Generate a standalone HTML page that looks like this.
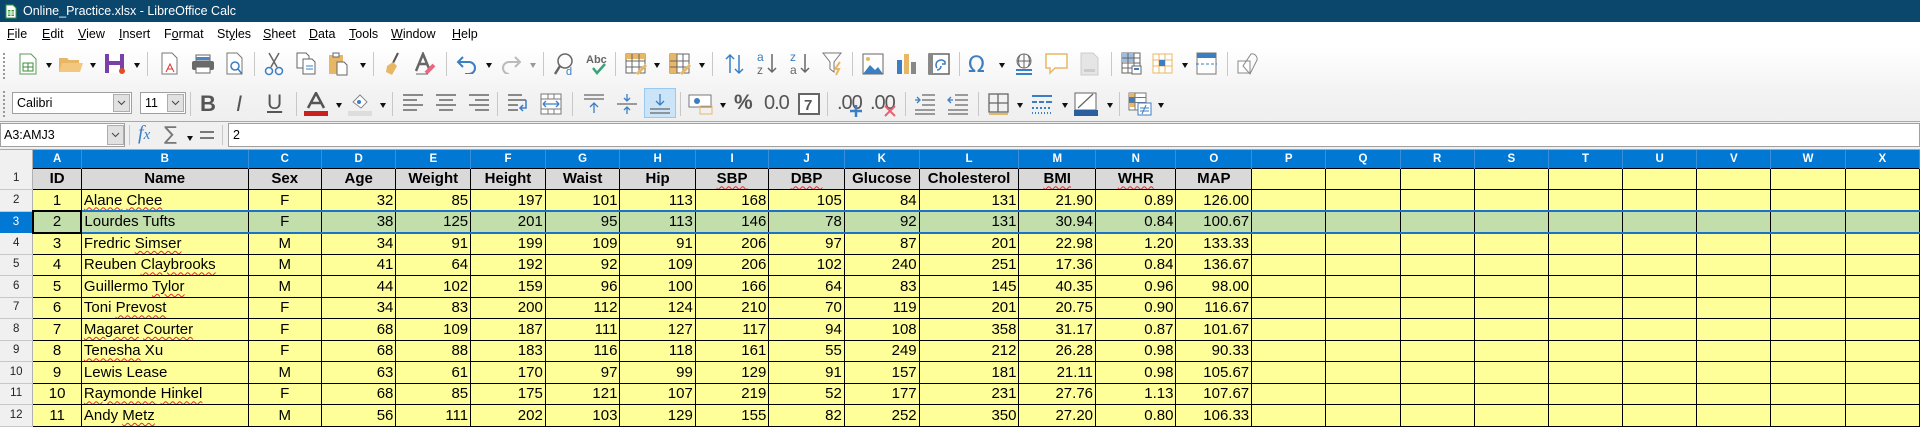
<!DOCTYPE html>
<html><head><meta charset="utf-8">
<style>
*{margin:0;padding:0;box-sizing:border-box}
body{width:1920px;height:428px;overflow:hidden;background:#fff;font-family:"Liberation Sans",sans-serif;position:relative}
.abs{position:absolute}
#title{left:0;top:0;width:1920px;height:22px;background:#0b466d;color:#fff;font-size:12.5px;line-height:22px;padding-left:23px}
#menu{left:0;top:22px;width:1920px;height:25px;background:#fff;font-size:12.5px}
#menu span{position:absolute;top:5px;color:#000}
#tb{left:0;top:47px;width:1920px;height:74px;background:linear-gradient(#fff,#f3f3f3 60%,#efefef)}
.ic{position:absolute}
.dd{position:absolute;width:0;height:0;border-left:3.5px solid transparent;border-right:3.5px solid transparent;border-top:5px solid #111}
.sep{position:absolute;width:1px;height:24px;background:#c8c8c8}
#fb{left:0;top:121px;width:1920px;height:29px;background:#f0f0f0;border-top:1px solid #a8a8a8;border-bottom:1px solid #a8a8a8}
table{position:absolute;left:0;top:150px;border-collapse:collapse;table-layout:fixed;font-size:15px}
td{border:1px solid #000;background:#ffff99;padding:0 2px;white-space:nowrap;overflow:hidden;height:21.5px;line-height:19px}
tr.h td{background:#0078d4;color:#fff;font-weight:bold;font-size:11.5px;text-align:center;height:18px;line-height:16px;border:none;border-right:1px solid #3a8fd8}
td.r{background:#f0f0f0;color:#222;font-size:11.5px;text-align:center;border:none;border-bottom:1px solid #c8c8c8;border-right:1px solid #b0b0b0}
tr.t td{background:#d9d9d9;font-weight:bold;text-align:center}
tr.t td.e{background:#ffff99}
td.n{text-align:right}
td.c{text-align:center}
tr.s td{background:#c1deab;border-top:2px solid #1a73c8;border-bottom:2px solid #1a73c8}
tr.s td.r{background:#0078d4;color:#fff;border-top:none;border-bottom:none}
tr.s td.a{border:2px solid #000}
.w{text-decoration:underline wavy #e03030;text-decoration-thickness:1px;text-underline-offset:2px}
</style></head><body>
<div id="title" class="abs">Online_Practice.xlsx - LibreOffice Calc</div>
<svg class="abs" style="left:5px;top:4px" width="12" height="15"><path d="M1 1h7l3 3v10H1z" fill="#fff" stroke="#3a9b3a"/><rect x="3" y="6" width="6" height="6" fill="#3a9b3a"/><path d="M3 8h6M3 10h6M6 6v6" stroke="#fff"/></svg>
<div id="menu" class="abs">
<span style="left:7px"><u>F</u>ile</span><span style="left:42px"><u>E</u>dit</span><span style="left:78px"><u>V</u>iew</span><span style="left:119px"><u>I</u>nsert</span><span style="left:164px">F<u>o</u>rmat</span><span style="left:217px">St<u>y</u>les</span><span style="left:263px"><u>S</u>heet</span><span style="left:309px"><u>D</u>ata</span><span style="left:349px"><u>T</u>ools</span><span style="left:391px"><u>W</u>indow</span><span style="left:452px"><u>H</u>elp</span>
</div>
<div id="tb" class="abs">
<div class="abs" style="left:3px;top:6px;width:2px;height:26px;border-left:2px dotted #999"></div>
<div class="abs" style="left:3px;top:44px;width:2px;height:26px;border-left:2px dotted #999"></div>
<!-- row1 icons (center y ~17) -->
<svg class="ic" style="left:18px;top:6px" width="20" height="22"><path d="M2 1h11l5 5v15H2z" fill="#fff" stroke="#5a9a5a"/><rect x="5" y="10" width="10" height="8" fill="none" stroke="#3d8b3d"/><path d="M5 14h10M10 10v8" stroke="#3d8b3d"/></svg>
<div class="dd" style="left:46px;top:16px"></div>
<svg class="ic" style="left:58px;top:8px" width="26" height="18"><path d="M1 3h8l2 2h10v12H1z" fill="#e8b766"/><path d="M4 8h21l-3 9H1z" fill="#f2c77e"/></svg>
<div class="dd" style="left:90px;top:16px"></div>
<svg class="ic" style="left:104px;top:6px" width="22" height="22"><rect x="1" y="1" width="19" height="19" fill="#7b3fa8"/><rect x="5" y="1" width="11" height="7" fill="#fff"/><rect x="5" y="12" width="11" height="8" fill="#fff"/><circle cx="18" cy="18" r="3" fill="#e24b26"/></svg>
<div class="dd" style="left:134px;top:16px"></div>
<div class="sep" style="left:147px;top:5px"></div>
<svg class="ic" style="left:160px;top:5px" width="20" height="24"><path d="M2 1h10l5 5v16H2z" fill="#fff" stroke="#777"/><path d="M6 20l4-8 4 8M7 17h6" stroke="#d33" fill="none"/></svg>
<svg class="ic" style="left:191px;top:7px" width="24" height="20"><rect x="5" y="1" width="14" height="6" fill="#fff" stroke="#666"/><rect x="1" y="7" width="22" height="9" rx="2" fill="#6a6a6a"/><rect x="5" y="13" width="14" height="6" fill="#fff" stroke="#666"/><rect x="5" y="3" width="14" height="3" fill="#4a86c5"/></svg>
<svg class="ic" style="left:225px;top:5px" width="20" height="24"><path d="M2 1h10l5 5v16H2z" fill="#fff" stroke="#777"/><circle cx="10" cy="14" r="4" fill="none" stroke="#3b7ec3" stroke-width="1.5"/><path d="M13 17l4 5" stroke="#3b7ec3" stroke-width="1.5"/></svg>
<div class="sep" style="left:254px;top:5px"></div>
<svg class="ic" style="left:264px;top:5px" width="20" height="24"><path d="M5 1l8 14M15 1L7 15" stroke="#666" stroke-width="1.5"/><circle cx="5" cy="19" r="3.5" fill="none" stroke="#3b7ec3" stroke-width="1.5"/><circle cx="15" cy="19" r="3.5" fill="none" stroke="#3b7ec3" stroke-width="1.5"/></svg>
<svg class="ic" style="left:296px;top:5px" width="20" height="24"><path d="M1 1h9l3 3v12H1z" fill="#fff" stroke="#666"/><path d="M7 7h9l3 3v12H7z" fill="#fff" stroke="#666"/><path d="M10 14h7M10 17h7" stroke="#3b7ec3"/></svg>
<svg class="ic" style="left:328px;top:5px" width="20" height="24"><rect x="1" y="3" width="14" height="19" fill="#e8b766"/><rect x="5" y="1" width="6" height="4" fill="#fff" stroke="#666"/><path d="M9 10h7l3 3v10H9z" fill="#fff" stroke="#666"/></svg>
<div class="dd" style="left:360px;top:16px"></div>
<div class="sep" style="left:373px;top:5px"></div>
<svg class="ic" style="left:383px;top:5px" width="20" height="24"><path d="M15 1l-5 10" stroke="#555" stroke-width="2"/><path d="M4 14l6-4 4 4-5 9-6-3z" fill="#e8b766"/></svg>
<svg class="ic" style="left:414px;top:5px" width="22" height="24"><path d="M2 19L9 2l7 17M5 12h9" stroke="#666" stroke-width="2.5" fill="none"/><path d="M12 21l8-8" stroke="#e8677f" stroke-width="4"/><path d="M2 22h12" stroke="#666"/></svg>
<div class="sep" style="left:446px;top:5px"></div>
<svg class="ic" style="left:456px;top:7px" width="22" height="20"><path d="M7 3L2 8l5 5" stroke="#3b7ec3" stroke-width="2" fill="none"/><path d="M2 8h11a6 6 0 0 1 0 12h-4" stroke="#3b7ec3" stroke-width="2" fill="none"/></svg>
<div class="dd" style="left:486px;top:16px"></div>
<svg class="ic" style="left:500px;top:7px" width="22" height="20"><path d="M15 3l5 5-5 5" stroke="#bbb" stroke-width="2" fill="none"/><path d="M20 8H9a6 6 0 0 0 0 12" stroke="#bbb" stroke-width="2" fill="none"/></svg>
<div class="dd" style="left:530px;top:16px;border-top-color:#999"></div>
<div class="sep" style="left:543px;top:5px"></div>
<svg class="ic" style="left:553px;top:5px" width="24" height="24"><circle cx="12" cy="9" r="7" fill="none" stroke="#666" stroke-width="1.5"/><path d="M7 14l-5 8" stroke="#666" stroke-width="2.5"/><text x="13" y="23" font-size="11" fill="#3b7ec3" font-family="Liberation Sans">d</text></svg>
<svg class="ic" style="left:586px;top:4px" width="26" height="26"><text x="0" y="12" font-size="11" font-weight="bold" fill="#666" font-family="Liberation Sans">Abc</text><path d="M7 17l4 5 8-9" stroke="#3aa37a" stroke-width="2.5" fill="none"/></svg>
<div class="sep" style="left:615px;top:5px"></div>
<svg class="ic" style="left:625px;top:6px" width="24" height="22"><rect x="1" y="1" width="19" height="19" fill="#fff" stroke="#666"/><rect x="1" y="1" width="19" height="5" fill="#e8b766"/><path d="M1 8h19M1 14h19M7 1v19M14 1v19" stroke="#666"/><path d="M12 21l9-9" stroke="#e8b766" stroke-width="3"/></svg>
<div class="dd" style="left:654px;top:16px"></div>
<svg class="ic" style="left:669px;top:6px" width="24" height="22"><rect x="1" y="1" width="19" height="19" fill="#fff" stroke="#666"/><rect x="1" y="1" width="7" height="19" fill="#e8b766"/><path d="M1 8h19M1 14h19M8 1v19M14 1v19" stroke="#666"/><path d="M12 21l9-9" stroke="#e8b766" stroke-width="3"/></svg>
<div class="dd" style="left:699px;top:16px"></div>
<div class="sep" style="left:712px;top:5px"></div>
<svg class="ic" style="left:724px;top:6px" width="22" height="22"><path d="M6 20V2M2 6l4-4 4 4M15 2v18M11 16l4 4 4-4" stroke="#3b7ec3" stroke-width="1.5" fill="none"/></svg>
<svg class="ic" style="left:756px;top:3px" width="24" height="26"><text x="1" y="11" font-size="12" fill="#3b7ec3" font-family="Liberation Sans">a</text><text x="1" y="24" font-size="12" fill="#666" font-family="Liberation Sans">z</text><path d="M16 4v18M12 18l4 4 4-4" stroke="#666" stroke-width="1.5" fill="none"/></svg>
<svg class="ic" style="left:789px;top:3px" width="24" height="26"><text x="1" y="11" font-size="12" fill="#3b7ec3" font-family="Liberation Sans">z</text><text x="1" y="24" font-size="12" fill="#666" font-family="Liberation Sans">a</text><path d="M16 4v18M12 18l4 4 4-4" stroke="#666" stroke-width="1.5" fill="none"/></svg>
<svg class="ic" style="left:822px;top:5px" width="24" height="24"><path d="M1 1h18l-7 9v10l-4-3v-7z" fill="#fff" stroke="#777"/><path d="M18 10l-5 7h4l-3 6" stroke="#e8b766" stroke-width="2" fill="none"/></svg>
<div class="sep" style="left:852px;top:5px"></div>
<svg class="ic" style="left:862px;top:6px" width="22" height="22"><rect x="1" y="1" width="20" height="20" fill="#fff" stroke="#666"/><path d="M1 21l7-9 5 5 3-3 5 7z" fill="#3b7ec3"/><circle cx="6" cy="6" r="2" fill="#e8b766"/></svg>
<svg class="ic" style="left:895px;top:6px" width="22" height="22"><rect x="2" y="7" width="5" height="14" fill="#3b7ec3"/><rect x="9" y="1" width="5" height="20" fill="#e8b766"/><rect x="16" y="9" width="5" height="12" fill="#888"/></svg>
<svg class="ic" style="left:928px;top:6px" width="22" height="22"><rect x="1" y="1" width="20" height="20" fill="#fff" stroke="#666" stroke-width="1.5"/><rect x="1" y="1" width="4" height="20" fill="#888"/><path d="M9 15a5 5 0 0 1 8-6M17 8v3h-3M13 13a4 4 0 0 1-4 4" stroke="#3b7ec3" stroke-width="1.5" fill="none"/></svg>
<div class="sep" style="left:959px;top:5px"></div>
<svg class="ic" style="left:968px;top:5px" width="24" height="24"><text x="0" y="20" font-size="22" fill="#3b7ec3" font-family="DejaVu Sans">Ω</text></svg>
<div class="dd" style="left:999px;top:16px"></div>
<svg class="ic" style="left:1013px;top:5px" width="24" height="24"><circle cx="11" cy="9" r="7" fill="none" stroke="#666"/><path d="M4 9h14M11 2v14M7 3q-3 6 0 12M15 3q3 6 0 12" stroke="#666" fill="none"/><path d="M3 18h16M3 22h16" stroke="#3b7ec3" stroke-width="2"/></svg>
<svg class="ic" style="left:1045px;top:6px" width="24" height="22"><path d="M1 1h21v14H10l-5 5v-5H1z" fill="#fff" stroke="#e8b766" stroke-width="1.5"/></svg>
<svg class="ic" style="left:1080px;top:5px" width="20" height="24"><path d="M1 1h12l5 5v17H1z" fill="#e5e5e5" stroke="#ccc"/><rect x="4" y="17" width="11" height="3" fill="#ccc"/></svg>
<div class="sep" style="left:1111px;top:5px"></div>
<svg class="ic" style="left:1121px;top:5px" width="22" height="24"><rect x="1" y="1" width="18" height="20" fill="#fff" stroke="#666"/><rect x="1" y="1" width="12" height="9" fill="#9dbee0"/><path d="M1 6h18M1 11h18M1 16h18M7 1v20M13 1v20" stroke="#666"/><rect x="11" y="14" width="9" height="8" fill="#fff" stroke="#666"/><rect x="13" y="16" width="5" height="2" fill="#3b7ec3"/></svg>
<svg class="ic" style="left:1152px;top:6px" width="22" height="22"><rect x="1" y="1" width="19" height="19" fill="#fff" stroke="#e8b766"/><path d="M1 7h19M1 13h19M7 1v19M13 1v19" stroke="#e8b766"/><rect x="7" y="7" width="6" height="6" fill="#3b7ec3"/></svg>
<div class="dd" style="left:1182px;top:16px"></div>
<svg class="ic" style="left:1196px;top:5px" width="22" height="24"><rect x="1" y="1" width="19" height="21" fill="#fff" stroke="#777"/><rect x="1" y="1" width="19" height="5" fill="#3b7ec3"/><path d="M0 12h21" stroke="#3b7ec3" stroke-dasharray="3 2"/></svg>
<div class="sep" style="left:1227px;top:5px"></div>
<svg class="ic" style="left:1237px;top:5px" width="24" height="24"><rect x="1" y="9" width="12" height="12" fill="#fff" stroke="#888"/><path d="M14 2a5 5 0 0 1 5 8l-6 12-7-8z" fill="none" stroke="#888"/></svg>

<!-- row2 -->
<div class="abs" style="left:12px;top:45px;width:120px;height:22px;background:#fff;border:1px solid #a0a0a0;font-size:12.5px;line-height:20px;padding-left:4px">Calibri</div>
<div class="abs" style="left:113px;top:47px;width:17px;height:18px;background:#e1e1e1;border:1px solid #adadad"></div>
<svg class="ic" style="left:117px;top:53px" width="9" height="6"><path d="M1 1l3.5 3.5L8 1" stroke="#444" fill="none"/></svg>
<div class="abs" style="left:140px;top:45px;width:46px;height:22px;background:#fff;border:1px solid #a0a0a0;font-size:12.5px;line-height:20px;padding-left:4px">11</div>
<div class="abs" style="left:167px;top:47px;width:17px;height:18px;background:#e1e1e1;border:1px solid #adadad"></div>
<svg class="ic" style="left:171px;top:53px" width="9" height="6"><path d="M1 1l3.5 3.5L8 1" stroke="#444" fill="none"/></svg>
<div class="sep" style="left:190px;top:45px"></div>
<div class="abs" style="left:200px;top:44px;font-size:22px;font-weight:bold;color:#555">B</div>
<div class="abs" style="left:236px;top:44px;font-size:22px;font-style:italic;color:#555;font-family:'Liberation Sans'">I</div>
<div class="abs" style="left:267px;top:44px;font-size:21px;color:#555;text-decoration:underline">U</div>
<div class="sep" style="left:296px;top:45px"></div>
<svg class="ic" style="left:304px;top:45px" width="24" height="24"><path d="M4 16L12 1l8 15M7 11h10" stroke="#555" stroke-width="2.5" fill="none"/><rect x="0" y="19" width="24" height="5" fill="#c9211e"/></svg>
<div class="dd" style="left:336px;top:56px"></div>
<svg class="ic" style="left:348px;top:45px" width="24" height="24"><path d="M5 10l7-7 7 7-6 6z" fill="#fff" stroke="#888"/><circle cx="11" cy="10" r="2" fill="#3b7ec3"/><rect x="0" y="19" width="24" height="5" fill="#ddd"/></svg>
<div class="dd" style="left:380px;top:56px"></div>
<div class="sep" style="left:392px;top:45px"></div>
<svg class="ic" style="left:402px;top:46px" width="22" height="20"><path d="M1 2h20M1 7h14M1 12h20M1 17h14" stroke="#666" stroke-width="1.5"/></svg>
<svg class="ic" style="left:435px;top:46px" width="22" height="20"><path d="M1 2h20M4 7h14M1 12h20M4 17h14" stroke="#666" stroke-width="1.5"/></svg>
<svg class="ic" style="left:468px;top:46px" width="22" height="20"><path d="M1 2h20M7 7h14M1 12h20M7 17h14" stroke="#666" stroke-width="1.5"/></svg>
<div class="sep" style="left:497px;top:45px"></div>
<svg class="ic" style="left:507px;top:46px" width="22" height="22"><path d="M1 2h14M1 7h18M1 12h10M1 17h10" stroke="#666" stroke-width="1.5"/><path d="M19 7v8h-5M16 12l-3 3 3 3" stroke="#3b7ec3" stroke-width="1.5" fill="none"/></svg>
<svg class="ic" style="left:540px;top:46px" width="22" height="22"><rect x="1" y="1" width="20" height="20" fill="#fff" stroke="#777"/><path d="M1 6h20M1 16h20M8 1v5M14 1v5M8 16v5M14 16v5" stroke="#777"/><path d="M3 11h16M3 11l3-3M3 11l3 3M19 11l-3-3M19 11l-3 3" stroke="#3b7ec3" stroke-width="1.3"/></svg>
<div class="sep" style="left:572px;top:45px"></div>
<svg class="ic" style="left:583px;top:46px" width="22" height="22"><path d="M1 2h20M1 6h20" stroke="#666" stroke-width="1.3"/><path d="M11 20V10M7 14l4-4 4 4" stroke="#3b7ec3" stroke-width="1.3" fill="none"/></svg>
<svg class="ic" style="left:616px;top:46px" width="22" height="22"><path d="M1 11h20" stroke="#666" stroke-width="1.3"/><path d="M11 1v7M8 5l3 3 3-3M11 21v-7M8 17l3-3 3 3" stroke="#3b7ec3" stroke-width="1.3" fill="none"/></svg>
<div class="abs" style="left:644px;top:41px;width:32px;height:30px;background:#cce4f7;border:1px solid #99c9ef"></div>
<svg class="ic" style="left:649px;top:46px" width="22" height="22"><path d="M1 16h20M1 20h20" stroke="#666" stroke-width="1.3"/><path d="M11 1v11M7 8l4 4 4-4" stroke="#3b7ec3" stroke-width="1.3" fill="none"/></svg>
<div class="sep" style="left:680px;top:45px"></div>
<svg class="ic" style="left:688px;top:46px" width="26" height="22"><rect x="1" y="2" width="22" height="12" fill="#fff" stroke="#777"/><circle cx="9" cy="8" r="3" fill="#3b7ec3"/><rect x="12" y="13" width="12" height="8" fill="none" stroke="#e8b766"/></svg>
<div class="dd" style="left:720px;top:56px"></div>
<div class="abs" style="left:734px;top:44px;font-size:21px;font-weight:bold;color:#555">%</div>
<div class="abs" style="left:764px;top:45px;font-size:20px;color:#555;letter-spacing:-1px">0.0</div>
<svg class="ic" style="left:798px;top:46px" width="22" height="22"><rect x="1" y="1" width="20" height="20" fill="#fff" stroke="#666" stroke-width="2"/><text x="6" y="17" font-size="15" font-weight="bold" fill="#555" font-family="Liberation Sans">7</text></svg>
<div class="sep" style="left:827px;top:45px"></div>
<div class="abs" style="left:837px;top:45px;font-size:20px;color:#555;letter-spacing:-1px">.00</div>
<svg class="ic" style="left:850px;top:58px" width="12" height="12"><path d="M6 0v12M0 6h12" stroke="#3b7ec3" stroke-width="2.5"/></svg>
<div class="abs" style="left:870px;top:45px;font-size:20px;color:#555;letter-spacing:-1px">.00</div>
<svg class="ic" style="left:884px;top:58px" width="12" height="12"><path d="M1 1l10 10M11 1L1 11" stroke="#e86070" stroke-width="2"/></svg>
<div class="sep" style="left:905px;top:45px"></div>
<svg class="ic" style="left:914px;top:46px" width="22" height="22"><path d="M8 2h13M8 7h13M8 12h13M1 17h20M1 21h20" stroke="#666" stroke-width="1.3"/><path d="M1 7h5M3 4l3 3-3 3" stroke="#3b7ec3" stroke-width="1.3" fill="none"/></svg>
<svg class="ic" style="left:947px;top:46px" width="22" height="22"><path d="M8 2h13M8 7h13M8 12h13M1 17h20M1 21h20" stroke="#666" stroke-width="1.3"/><path d="M6 7H1M4 4L1 7l3 3" stroke="#3b7ec3" stroke-width="1.3" fill="none"/></svg>
<div class="sep" style="left:978px;top:45px"></div>
<svg class="ic" style="left:988px;top:46px" width="22" height="22"><rect x="1" y="1" width="19" height="18" fill="none" stroke="#666" stroke-width="1.3"/><path d="M10 1v18M1 10h19" stroke="#666" stroke-width="1.3"/><path d="M1 21h19" stroke="#e8b766" stroke-width="2"/></svg>
<div class="dd" style="left:1017px;top:56px"></div>
<svg class="ic" style="left:1031px;top:46px" width="22" height="22"><path d="M1 3h20M1 9h5M8 9h5M15 9h6M1 15h2M5 15h2M9 15h2M13 15h2M17 15h2" stroke="#3b7ec3" stroke-width="2"/><path d="M1 20h20" stroke="#3b7ec3" stroke-dasharray="1 2" stroke-width="2"/></svg>
<div class="dd" style="left:1062px;top:56px"></div>
<svg class="ic" style="left:1074px;top:45px" width="24" height="24"><rect x="1" y="1" width="21" height="17" fill="#fff" stroke="#666"/><path d="M4 16L19 2" stroke="#666" stroke-width="1.3"/><rect x="0" y="18" width="24" height="6" fill="#2a5f9e"/></svg>
<div class="dd" style="left:1107px;top:56px"></div>
<div class="sep" style="left:1119px;top:45px"></div>
<svg class="ic" style="left:1128px;top:45px" width="24" height="24"><rect x="1" y="1" width="17" height="17" fill="#fff" stroke="#777"/><rect x="1" y="1" width="6" height="4" fill="#e8b766"/><rect x="1" y="6" width="6" height="4" fill="#3b7ec3"/><rect x="1" y="11" width="6" height="4" fill="#e8b766"/><path d="M1 5.5h17M1 10.5h17M7 1v17" stroke="#777"/><rect x="10" y="11" width="13" height="12" fill="#fff" stroke="#3b7ec3"/><path d="M12 16h9M12 19h9M18 13l-4 9" stroke="#3b7ec3"/></svg>
<div class="dd" style="left:1158px;top:56px"></div>
</div>
<div id="fb" class="abs"></div>
<div class="abs" style="left:0;top:123px;width:125px;height:24px;background:#fff;border:1px solid #a0a0a0;font-size:12.5px;line-height:22px;padding-left:3px">A3:AMJ3</div>
<div class="abs" style="left:107px;top:125px;width:17px;height:20px;background:#e1e1e1;border:1px solid #adadad"></div>
<svg class="ic" style="left:111px;top:132px" width="9" height="6"><path d="M1 1l3.5 3.5L8 1" stroke="#444" fill="none"/></svg>
<div class="sep" style="left:129px;top:125px;height:20px"></div>
<div class="abs" style="left:138px;top:122px;font-size:20px;font-style:italic;color:#3b7ec3;font-family:'Liberation Serif'">f<span style="font-size:15px">x</span></div>
<div class="abs" style="left:164px;top:123px;font-size:19px;color:#777;font-family:'DejaVu Sans'">∑</div>
<div class="dd" style="left:187px;top:136px"></div>
<svg class="ic" style="left:200px;top:130px" width="14" height="10"><path d="M0 2h14M0 8h14" stroke="#777" stroke-width="2"/></svg>
<div class="sep" style="left:222px;top:125px;height:20px"></div>
<div class="abs" style="left:228px;top:123px;width:1692px;height:24px;background:#fff;border:1px solid #a0a0a0;font-size:12.5px;line-height:22px;padding-left:4px">2</div>

<table>
<colgroup><col style="width:33px"><col style="width:49px"><col style="width:167px"><col style="width:74px"><col style="width:75px"><col style="width:75px"><col style="width:75px"><col style="width:75px"><col style="width:76px"><col style="width:74px"><col style="width:76px"><col style="width:75px"><col style="width:100px"><col style="width:77px"><col style="width:81px"><col style="width:76px"><col style="width:75px"><col style="width:75px"><col style="width:75px"><col style="width:75px"><col style="width:75px"><col style="width:75px"><col style="width:75px"><col style="width:75px"><col style="width:75px"></colgroup>
<tr class="h"><td style="background:#f0f0f0;border-right:1px solid #b0b0b0"></td><td>A</td><td>B</td><td>C</td><td>D</td><td>E</td><td>F</td><td>G</td><td>H</td><td>I</td><td>J</td><td>K</td><td>L</td><td>M</td><td>N</td><td>O</td><td>P</td><td>Q</td><td>R</td><td>S</td><td>T</td><td>U</td><td>V</td><td>W</td><td>X</td></tr>
<tr class="t"><td class="r" style="font-weight:normal;background:#f0f0f0">1</td><td>ID</td><td>Name</td><td>Sex</td><td>Age</td><td>Weight</td><td>Height</td><td>Waist</td><td>Hip</td><td><span class="w">SBP</span></td><td><span class="w">DBP</span></td><td>Glucose</td><td>Cholesterol</td><td><span class="w">BMI</span></td><td><span class="w">WHR</span></td><td>MAP</td><td class="e"></td><td class="e"></td><td class="e"></td><td class="e"></td><td class="e"></td><td class="e"></td><td class="e"></td><td class="e"></td><td class="e"></td></tr>
<tr><td class="r">2</td><td class="c">1</td><td><span class="w">Alane</span> <span class="w">Chee</span></td><td class="c">F</td><td class="n">32</td><td class="n">85</td><td class="n">197</td><td class="n">101</td><td class="n">113</td><td class="n">168</td><td class="n">105</td><td class="n">84</td><td class="n">131</td><td class="n">21.90</td><td class="n">0.89</td><td class="n">126.00</td><td></td><td></td><td></td><td></td><td></td><td></td><td></td><td></td><td></td></tr>
<tr class="s"><td class="r">3</td><td class="c a">2</td><td>Lourdes Tufts</td><td class="c">F</td><td class="n">38</td><td class="n">125</td><td class="n">201</td><td class="n">95</td><td class="n">113</td><td class="n">146</td><td class="n">78</td><td class="n">92</td><td class="n">131</td><td class="n">30.94</td><td class="n">0.84</td><td class="n">100.67</td><td></td><td></td><td></td><td></td><td></td><td></td><td></td><td></td><td></td></tr>
<tr><td class="r">4</td><td class="c">3</td><td>Fredric <span class="w">Simser</span></td><td class="c">M</td><td class="n">34</td><td class="n">91</td><td class="n">199</td><td class="n">109</td><td class="n">91</td><td class="n">206</td><td class="n">97</td><td class="n">87</td><td class="n">201</td><td class="n">22.98</td><td class="n">1.20</td><td class="n">133.33</td><td></td><td></td><td></td><td></td><td></td><td></td><td></td><td></td><td></td></tr>
<tr><td class="r">5</td><td class="c">4</td><td>Reuben <span class="w">Claybrooks</span></td><td class="c">M</td><td class="n">41</td><td class="n">64</td><td class="n">192</td><td class="n">92</td><td class="n">109</td><td class="n">206</td><td class="n">102</td><td class="n">240</td><td class="n">251</td><td class="n">17.36</td><td class="n">0.84</td><td class="n">136.67</td><td></td><td></td><td></td><td></td><td></td><td></td><td></td><td></td><td></td></tr>
<tr><td class="r">6</td><td class="c">5</td><td>Guillermo <span class="w">Tylor</span></td><td class="c">M</td><td class="n">44</td><td class="n">102</td><td class="n">159</td><td class="n">96</td><td class="n">100</td><td class="n">166</td><td class="n">64</td><td class="n">83</td><td class="n">145</td><td class="n">40.35</td><td class="n">0.96</td><td class="n">98.00</td><td></td><td></td><td></td><td></td><td></td><td></td><td></td><td></td><td></td></tr>
<tr><td class="r">7</td><td class="c">6</td><td>Toni <span class="w">Prevost</span></td><td class="c">F</td><td class="n">34</td><td class="n">83</td><td class="n">200</td><td class="n">112</td><td class="n">124</td><td class="n">210</td><td class="n">70</td><td class="n">119</td><td class="n">201</td><td class="n">20.75</td><td class="n">0.90</td><td class="n">116.67</td><td></td><td></td><td></td><td></td><td></td><td></td><td></td><td></td><td></td></tr>
<tr><td class="r">8</td><td class="c">7</td><td><span class="w">Magaret</span> <span class="w">Courter</span></td><td class="c">F</td><td class="n">68</td><td class="n">109</td><td class="n">187</td><td class="n">111</td><td class="n">127</td><td class="n">117</td><td class="n">94</td><td class="n">108</td><td class="n">358</td><td class="n">31.17</td><td class="n">0.87</td><td class="n">101.67</td><td></td><td></td><td></td><td></td><td></td><td></td><td></td><td></td><td></td></tr>
<tr><td class="r">9</td><td class="c">8</td><td><span class="w">Tenesha</span> Xu</td><td class="c">F</td><td class="n">68</td><td class="n">88</td><td class="n">183</td><td class="n">116</td><td class="n">118</td><td class="n">161</td><td class="n">55</td><td class="n">249</td><td class="n">212</td><td class="n">26.28</td><td class="n">0.98</td><td class="n">90.33</td><td></td><td></td><td></td><td></td><td></td><td></td><td></td><td></td><td></td></tr>
<tr><td class="r">10</td><td class="c">9</td><td>Lewis Lease</td><td class="c">M</td><td class="n">63</td><td class="n">61</td><td class="n">170</td><td class="n">97</td><td class="n">99</td><td class="n">129</td><td class="n">91</td><td class="n">157</td><td class="n">181</td><td class="n">21.11</td><td class="n">0.98</td><td class="n">105.67</td><td></td><td></td><td></td><td></td><td></td><td></td><td></td><td></td><td></td></tr>
<tr><td class="r">11</td><td class="c">10</td><td><span class="w">Raymonde</span> <span class="w">Hinkel</span></td><td class="c">F</td><td class="n">68</td><td class="n">85</td><td class="n">175</td><td class="n">121</td><td class="n">107</td><td class="n">219</td><td class="n">52</td><td class="n">177</td><td class="n">231</td><td class="n">27.76</td><td class="n">1.13</td><td class="n">107.67</td><td></td><td></td><td></td><td></td><td></td><td></td><td></td><td></td><td></td></tr>
<tr><td class="r">12</td><td class="c">11</td><td>Andy <span class="w">Metz</span></td><td class="c">M</td><td class="n">56</td><td class="n">111</td><td class="n">202</td><td class="n">103</td><td class="n">129</td><td class="n">155</td><td class="n">82</td><td class="n">252</td><td class="n">350</td><td class="n">27.20</td><td class="n">0.80</td><td class="n">106.33</td><td></td><td></td><td></td><td></td><td></td><td></td><td></td><td></td><td></td></tr>
</table>
</body></html>
